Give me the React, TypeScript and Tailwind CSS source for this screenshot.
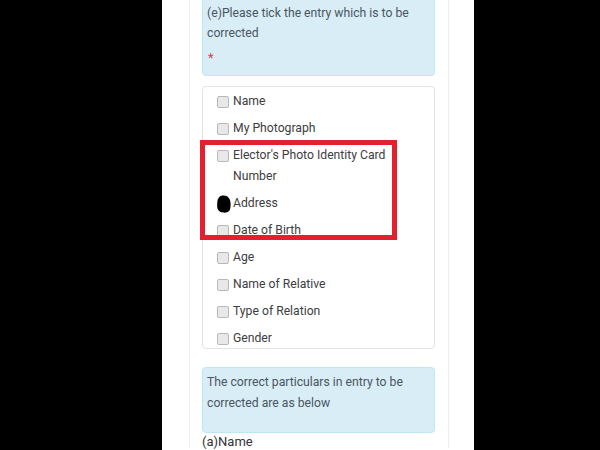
import React from 'react';

const ITEMS = [
  'Name',
  'My Photograph',
  "Elector's Photo Identity Card Number",
  'Address',
  'Date of Birth',
  'Age',
  'Name of Relative',
  'Type of Relation',
  'Gender',
];

// the scribbled-over checkbox next to "Address"
const Blob = () => (
  <svg width="14" height="18" viewBox="0 0 14 18" className="absolute -left-[1px] -top-[4px]">
    <path
      d="M5.5 0.6 C8.8 0.2 11.8 1.8 12.9 4.8 C13.9 7.8 13.8 11.8 13 14.4 C12.1 17 9.2 17.8 6.6 17.6 C3.6 17.3 1.1 16.1 0.5 13.2 C-0.1 10.2 0.3 6.2 1.4 3.6 C2.3 1.6 3.7 0.8 5.5 0.6 Z"
      fill="#000"
    />
  </svg>
);

const CheckRow: React.FC<{ label: string; scribbled?: boolean }> = ({ label, scribbled }) => (
  <div className="flex items-start leading-[21px]">
    <span className="relative mt-[5px] w-[12px] h-[12px] shrink-0 rounded-[2px] border border-[#b8b8b8] bg-[#e8e8e8]">
      {scribbled && <Blob />}
    </span>
    <span className="ml-[4px] text-[#3d3d3d]">{label}</span>
  </div>
);

const App: React.FC = () => {
  return (
    <div className="w-[600px] h-[450px] bg-black flex overflow-hidden font-['Roboto','Liberation_Sans',sans-serif] text-[12.2px]">
      <div className="w-[162px] shrink-0" />

      <div className="w-[312px] shrink-0 bg-white pl-[27px]">
        <div className="relative w-[260px] h-full border-x border-[#eeeeee] pl-[12px] pr-[13px]">
          {/* question header */}
          <div className="-mt-[2px] rounded-[4px] border border-[#bce8f1] bg-[#d9edf7] pl-[4px] pr-[4px] pt-[4px] pb-[7px] text-[#4a5661] leading-[20px]">
            <div>(e)Please tick the entry which is to be corrected</div>
            <div className="mt-[5px] pl-[1px] text-[#e5383b] text-[13px]">*</div>
          </div>

          {/* options list */}
          <div className="mt-[10px] h-[263px] overflow-hidden rounded-[4px] border border-[#e3e3e3] pl-[14px] pr-[14px] pt-[4px] flex flex-col gap-[6px]">
            {ITEMS.map(item => (
              <CheckRow key={item} label={item} scribbled={item === 'Address'} />
            ))}
          </div>

          <div className="mt-[18px] rounded-[4px] border border-[#bce8f1] bg-[#d9edf7] pl-[4px] pr-[4px] pt-[4px] pb-[18px] text-[#4a5661] leading-[21px]">
            The correct particulars in entry to be corrected are as below
          </div>

          <div className="mt-[1px] leading-[16px] text-[13px] text-[#333]">(a)Name</div>

          {/* annotation */}
          <div className="absolute left-[10px] top-[142px] w-[197px] h-[100px] border-[5px] border-[#e3202e]" />
        </div>
      </div>
    </div>
  );
};

export default App;
